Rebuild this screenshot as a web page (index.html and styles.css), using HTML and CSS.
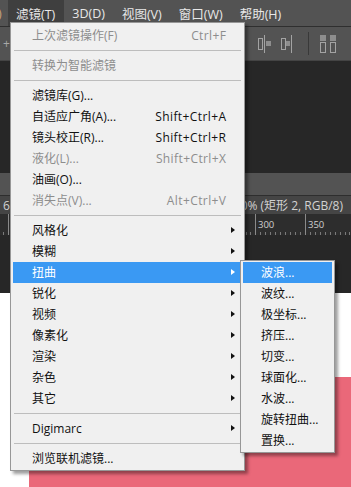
FILE: index.html
```html
<!DOCTYPE html>
<html lang="zh-CN">
<head>
<meta charset="utf-8">
<title>滤镜菜单</title>
<link rel="stylesheet" href="styles.css">
</head>
<body>
<div class="ps">
  <div class="menubar">
    <span class="mb-edge">)</span>
    <span class="mb-item active">滤镜(T)</span>
    <span class="mb-item">3D(D)</span>
    <span class="mb-item">视图(V)</span>
    <span class="mb-item">窗口(W)</span>
    <span class="mb-item">帮助(H)</span>
  </div>
  <div class="optbar">
    <span class="opt-plus">+</span>
    <div class="opt-icons">
      <svg class="ico ico-a" width="13" height="18" viewBox="0 0 13 18">
        <rect x="0.5" y="3.5" width="4" height="11" fill="none" stroke="#a3a3a3"/>
        <line x1="6.5" y1="0" x2="6.5" y2="18" stroke="#a3a3a3"/>
        <rect x="8" y="6" width="5" height="5" fill="#8e8e8e"/>
      </svg>
      <svg class="ico ico-b" width="12" height="18" viewBox="0 0 12 18">
        <rect x="0.5" y="3.5" width="4" height="11" fill="none" stroke="#a3a3a3"/>
        <rect x="5" y="6" width="4" height="5" fill="#8e8e8e"/>
        <line x1="10.5" y1="0" x2="10.5" y2="18" stroke="#a3a3a3"/>
      </svg>
      <span class="opt-sep"></span>
      <svg class="ico ico-c" width="17" height="18" viewBox="0 0 17 18">
        <rect x="0" y="0" width="6" height="6" fill="#8e8e8e"/>
        <rect x="0.5" y="7.5" width="5" height="10" fill="none" stroke="#a3a3a3"/>
        <rect x="10" y="0" width="6" height="6" fill="#8e8e8e"/>
        <rect x="10.5" y="7.5" width="5" height="10" fill="none" stroke="#a3a3a3"/>
      </svg>
    </div>
  </div>
  <div class="work-dark"></div>
  <div class="panelbar"></div>
  <div class="doctab">
    <span class="tab-left">6</span>
    <span class="tab-title">0% (矩形 2, RGB/8)</span>
  </div>
  <div class="ruler">
    <svg width="351" height="21" viewBox="0 0 351 21">
      <g stroke="#8a8a8a" stroke-width="1">
        <line x1="8.5" y1="0" x2="8.5" y2="21"/>
        <line x1="57.5" y1="0" x2="57.5" y2="21"/>
        <line x1="107.5" y1="0" x2="107.5" y2="21"/>
        <line x1="156.5" y1="0" x2="156.5" y2="21"/>
        <line x1="206.5" y1="0" x2="206.5" y2="21"/>
        <line x1="255.5" y1="0" x2="255.5" y2="21"/>
        <line x1="305.5" y1="0" x2="305.5" y2="21"/>
      </g>
      <g fill="#cfcfcf" font-family="Open Sans, sans-serif" font-size="9.5">
        <text x="258" y="14">300</text>
        <text x="308" y="14">350</text>
      </g>
    </svg>
  </div>
  <div class="work-dark2"></div>
  <div class="canvas">
    <div class="pink"></div>
  </div>
</div>

<div class="menu menu-main">
  <div class="mi disabled"><span class="lbl">上次滤镜操作(F)</span><span class="key">Ctrl+F</span></div>
  <div class="sep"></div>
  <div class="mi disabled"><span class="lbl">转换为智能滤镜</span></div>
  <div class="sep"></div>
  <div class="mi"><span class="lbl">滤镜库(G)...</span></div>
  <div class="mi"><span class="lbl">自适应广角(A)...</span><span class="key">Shift+Ctrl+A</span></div>
  <div class="mi"><span class="lbl">镜头校正(R)...</span><span class="key">Shift+Ctrl+R</span></div>
  <div class="mi disabled"><span class="lbl">液化(L)...</span><span class="key">Shift+Ctrl+X</span></div>
  <div class="mi"><span class="lbl">油画(O)...</span></div>
  <div class="mi disabled"><span class="lbl">消失点(V)...</span><span class="key">Alt+Ctrl+V</span></div>
  <div class="sep"></div>
  <div class="mi has-sub"><span class="lbl">风格化</span><span class="arrow"></span></div>
  <div class="mi has-sub"><span class="lbl">模糊</span><span class="arrow"></span></div>
  <div class="mi has-sub hl"><span class="lbl">扭曲</span><span class="arrow"></span></div>
  <div class="mi has-sub"><span class="lbl">锐化</span><span class="arrow"></span></div>
  <div class="mi has-sub"><span class="lbl">视频</span><span class="arrow"></span></div>
  <div class="mi has-sub"><span class="lbl">像素化</span><span class="arrow"></span></div>
  <div class="mi has-sub"><span class="lbl">渲染</span><span class="arrow"></span></div>
  <div class="mi has-sub"><span class="lbl">杂色</span><span class="arrow"></span></div>
  <div class="mi has-sub"><span class="lbl">其它</span><span class="arrow"></span></div>
  <div class="sep"></div>
  <div class="mi has-sub"><span class="lbl">Digimarc</span><span class="arrow"></span></div>
  <div class="sep"></div>
  <div class="mi"><span class="lbl">浏览联机滤镜...</span></div>
</div>

<div class="menu menu-sub">
  <div class="mi hl"><span class="lbl">波浪...</span></div>
  <div class="mi"><span class="lbl">波纹...</span></div>
  <div class="mi"><span class="lbl">极坐标...</span></div>
  <div class="mi"><span class="lbl">挤压...</span></div>
  <div class="mi"><span class="lbl">切变...</span></div>
  <div class="mi"><span class="lbl">球面化...</span></div>
  <div class="mi"><span class="lbl">水波...</span></div>
  <div class="mi"><span class="lbl">旋转扭曲...</span></div>
  <div class="mi"><span class="lbl">置换...</span></div>
</div>
</body>
</html>
```

FILE: styles.css
```css
* { box-sizing: border-box; }

html, body {
  margin: 0;
  padding: 0;
}

body {
  width: 351px;
  height: 487px;
  overflow: hidden;
  position: relative;
  font-family: "Open Sans", "Noto Sans CJK SC", sans-serif;
  background: #ffffff;
}

.ps {
  display: flex;
  flex-direction: column;
  width: 351px;
  height: 487px;
}

/* ---------- menu bar ---------- */
.menubar {
  height: 27px;
  flex: none;
  display: flex;
  align-items: stretch;
  background: #535353;
  border-bottom: 1px solid #2f2f2f;
  font-family: "Open Sans", "Noto Sans CJK SC", sans-serif;
  font-size: 12.5px;
  color: #e8e8e8;
  white-space: nowrap;
}

.mb-edge {
  width: 9.5px;
  display: flex;
  align-items: center;
  margin-left: -2px;
  color: #c9a27a;
  overflow: hidden;
}

.mb-item {
  display: flex;
  align-items: center;
  padding: 0 8.5px;
  height: 26px;
}

.mb-item.active {
  background: #3f3f3f;
}

/* ---------- options bar ---------- */
.optbar {
  height: 33px;
  flex: none;
  display: flex;
  align-items: center;
  background: #535353;
}

.opt-plus {
  color: #a8a8a8;
  font-size: 12px;
  padding-left: 3px;
}

.opt-icons {
  margin-left: auto;
  padding-right: 14px;
  display: flex;
  align-items: center;
}

.ico { display: block; }
.ico-b { margin-left: 10px; }
.opt-sep {
  width: 1px;
  height: 23px;
  background: #393939;
  margin-left: 15px;
  margin-right: 11px;
}

/* ---------- workspace ---------- */
.work-dark {
  height: 113px;
  flex: none;
  background: #272727;
  border-top: 1px solid #444444;
}

.panelbar {
  height: 23px;
  flex: none;
  background: #535353;
  border-bottom: 1px solid #2e2e2e;
}

.doctab {
  height: 18px;
  flex: none;
  background: #454545;
  display: flex;
  align-items: center;
  justify-content: space-between;
  padding: 0 8px 0 3px;
  font-size: 12px;
  color: #d2d2d2;
  white-space: nowrap;
}

.ruler {
  height: 21px;
  flex: none;
  background: #2d2d2d;
  background-image: repeating-linear-gradient(to right, #7a7a7a 0, #7a7a7a 1px, transparent 1px, transparent 4.95px);
  background-size: 100% 3px;
  background-position: 3px 100%;
  background-repeat: repeat-x;
}

.ruler svg { display: block; }

.work-dark2 {
  height: 58px;
  flex: none;
  background: #272727;
}

.canvas {
  flex: 1;
  background: #ffffff;
  padding-top: 84px;
  padding-left: 29px;
  display: flex;
  flex-direction: column;
}

.pink {
  flex: 1;
  background: #ea6879;
}

/* ---------- menus ---------- */
.menu {
  position: absolute;
  background: #f0f0f0;
  border: 1px solid #979797;
  box-shadow: 3px 3px 3px rgba(0, 0, 0, 0.38);
  font-family: "Open Sans", "Noto Sans CJK SC", sans-serif;
  font-size: 12px;
  color: #111111;
  white-space: nowrap;
}

.menu-main {
  left: 10px;
  top: 22px;
  width: 235px;
  padding: 1.5px 2px;
}

.menu-sub {
  left: 240px;
  top: 260px;
  width: 95px;
  padding: 1px 2px;
}

.mi {
  height: 21px;
  display: flex;
  align-items: center;
  padding-left: 19px;
  padding-right: 16px;
  line-height: 21px;
}

.menu-sub .mi {
  padding-left: 18px;
}

.mi .lbl {
  flex: 1;
}

.mi .key {
  letter-spacing: 0.4px;
  margin-right: -0.4px;
}

.mi.disabled {
  color: #8d8d8d;
}

.mi.has-sub {
  padding-right: 7px;
}

.arrow {
  width: 0;
  height: 0;
  border-style: solid;
  border-width: 3.5px 0 3.5px 4px;
  border-color: transparent transparent transparent #111111;
}

.mi.hl {
  background: #3a99f3;
  color: #ffffff;
}

.mi.hl .arrow {
  border-left-color: #ffffff;
}

.sep {
  height: 9px;
  padding: 4px 1px;
}

.sep::before {
  content: "";
  display: block;
  height: 1px;
  background: #bdbdbd;
}
```
